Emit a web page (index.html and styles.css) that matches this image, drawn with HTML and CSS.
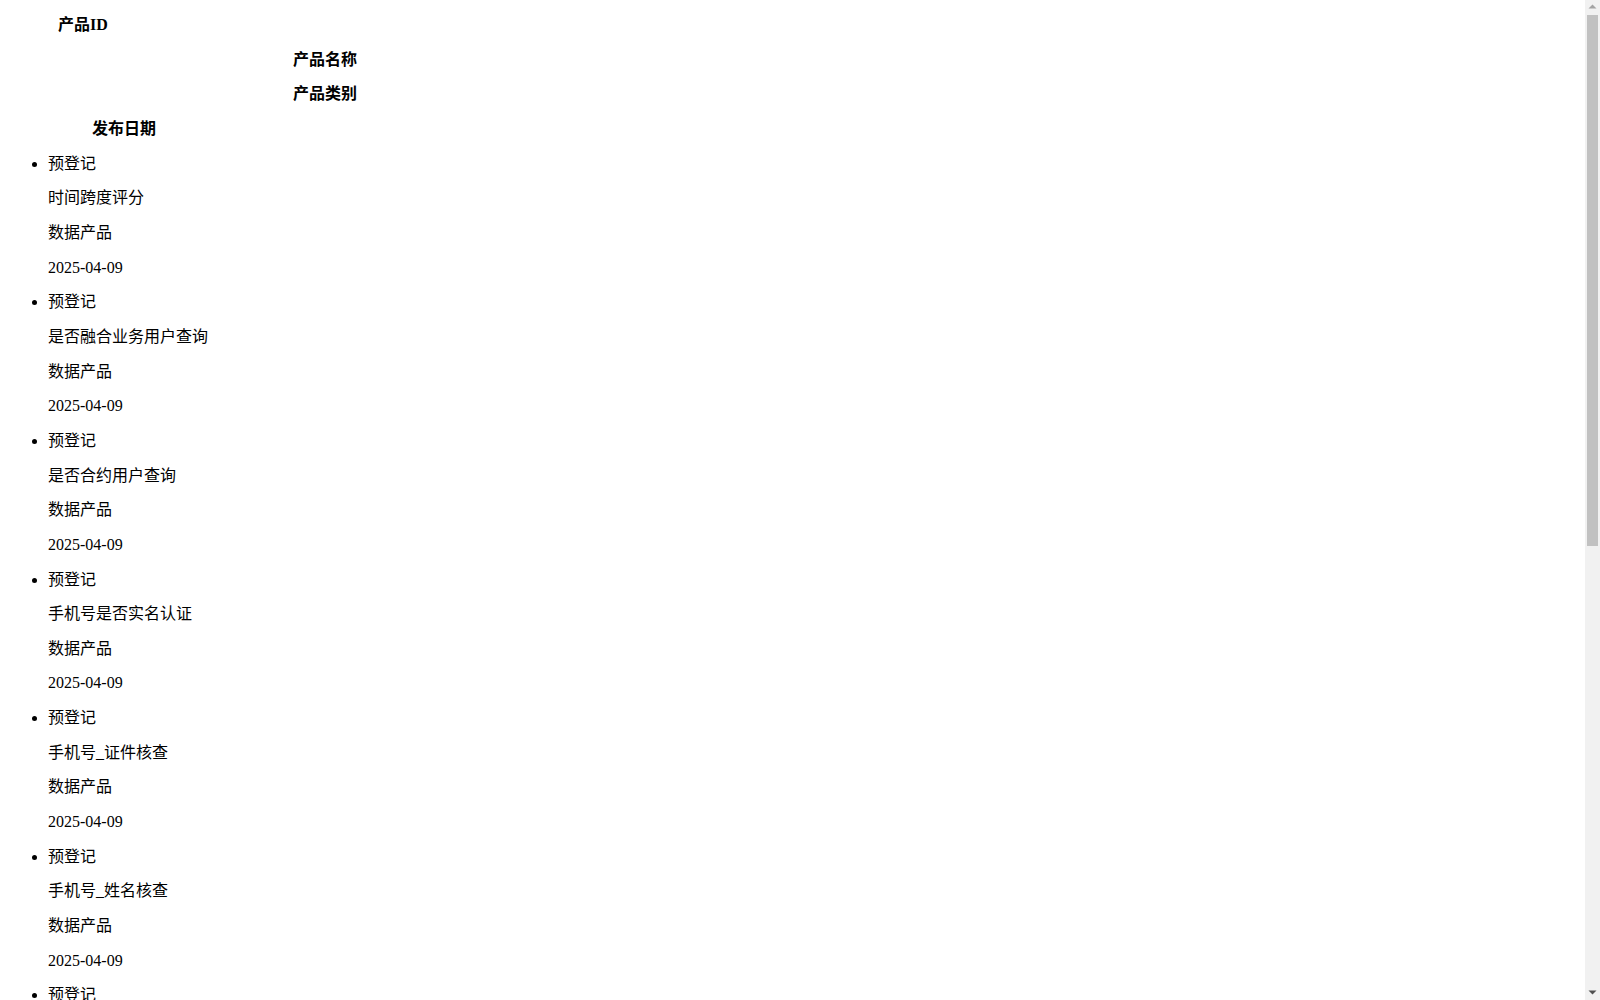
FILE: index.html
```html
<!DOCTYPE html>
<html lang="zh-CN">
<head>
<meta charset="utf-8">
<title>产品列表</title>
<link rel="stylesheet" href="styles.css">
</head>
<body>
<div class="page">
<div class="list-head">
  <p class="head-cell head-id">产品ID</p>
  <p class="head-cell head-name">产品名称</p>
  <p class="head-cell head-type">产品类别</p>
  <p class="head-cell head-date">发布日期</p>
</div>
<ul class="product-list">
  <li class="product"><p class="cell">预登记</p><p class="cell">时间跨度评分</p><p class="cell">数据产品</p><p class="cell">2025-04-09</p></li>
  <li class="product"><p class="cell">预登记</p><p class="cell">是否融合业务用户查询</p><p class="cell">数据产品</p><p class="cell">2025-04-09</p></li>
  <li class="product"><p class="cell">预登记</p><p class="cell">是否合约用户查询</p><p class="cell">数据产品</p><p class="cell">2025-04-09</p></li>
  <li class="product"><p class="cell">预登记</p><p class="cell">手机号是否实名认证</p><p class="cell">数据产品</p><p class="cell">2025-04-09</p></li>
  <li class="product"><p class="cell">预登记</p><p class="cell">手机号_证件核查</p><p class="cell">数据产品</p><p class="cell">2025-04-09</p></li>
  <li class="product"><p class="cell">预登记</p><p class="cell">手机号_姓名核查</p><p class="cell">数据产品</p><p class="cell">2025-04-09</p></li>
  <li class="product"><p class="cell">预登记</p><p class="cell">手机号在网时长</p><p class="cell">数据产品</p><p class="cell">2025-04-09</p></li>
  <li class="product"><p class="cell">预登记</p><p class="cell">手机号在网状态</p><p class="cell">数据产品</p><p class="cell">2025-04-09</p></li>
  <li class="product"><p class="cell">预登记</p><p class="cell">手机号三要素核验</p><p class="cell">数据产品</p><p class="cell">2025-04-09</p></li>
  <li class="product"><p class="cell">预登记</p><p class="cell">手机号二要素核验</p><p class="cell">数据产品</p><p class="cell">2025-04-09</p></li>
  <li class="product"><p class="cell">预登记</p><p class="cell">是否停机查询</p><p class="cell">数据产品</p><p class="cell">2025-04-09</p></li>
  <li class="product"><p class="cell">预登记</p><p class="cell">是否携号转网查询</p><p class="cell">数据产品</p><p class="cell">2025-04-09</p></li>
</ul>
</div>
<div class="scrollbar" aria-hidden="true">
  <svg class="sb-button" width="15" height="15" viewBox="0 0 15 15"><polygon points="3.5,8.5 11.5,8.5 7.5,4.5" fill="#a3a3a3"/></svg>
  <div class="sb-thumb"></div>
  <div class="sb-space"></div>
  <svg class="sb-button" width="15" height="15" viewBox="0 0 15 15"><polygon points="3.5,5.5 11.5,5.5 7.5,9.5" fill="#505050"/></svg>
</div>
</body>
</html>
```
FILE: styles.css
```css
html,
body {
  margin: 0;
  padding: 0;
  height: 100%;
  background: #ffffff;
}

body {
  overflow: hidden;
  color: #000000;
  font-family: "Liberation Serif", "Noto Sans CJK SC", serif;
  font-size: 16px;
  line-height: 18.65px;
}

.page {
  box-sizing: border-box;
  height: 100vh;
  overflow: hidden;
  padding: 0 23px 0 8px;
}

.list-head {
  display: block;
}

.head-cell {
  margin: 16px 0;
  font-weight: bold;
}

.head-id {
  padding-left: 50px;
}

.head-name,
.head-type {
  padding-left: 285px;
}

.head-date {
  padding-left: 84px;
}

.product-list {
  margin: 16px 0;
  padding-left: 40px;
  list-style: disc;
}

.product {
  display: list-item;
}

.cell {
  margin: 16px 0;
}

/* drawn vertical scrollbar overlay */
.scrollbar {
  position: fixed;
  top: 0;
  right: 0;
  width: 15px;
  height: 100vh;
  background: #f1f1f1;
  display: flex;
  flex-direction: column;
}

.sb-button {
  display: block;
  flex: 0 0 15px;
}

.sb-thumb {
  flex: 0 0 531px;
  margin: 0 2px;
  background: #c1c1c1;
}

.sb-space {
  flex: 1 1 auto;
}
```
